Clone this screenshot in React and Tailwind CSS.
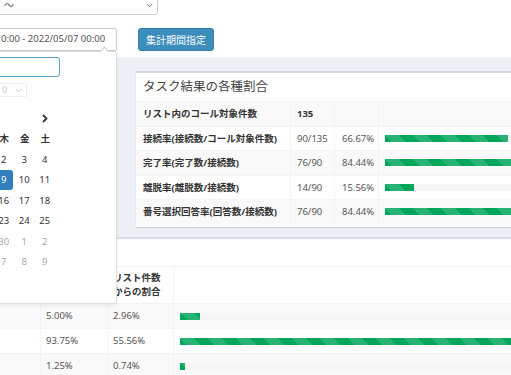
import React from 'react'

const stripe =
  "h-full bg-[#00a65a] bg-[linear-gradient(45deg,rgba(255,255,255,.15)_25%,transparent_25%,transparent_50%,rgba(255,255,255,.15)_50%,rgba(255,255,255,.15)_75%,transparent_75%,transparent)] bg-size-[28px_28px]";

const ratios = [
  { label: "リスト内のコール対象件数", value: "135", pct: null },
  { label: "接続率(接続数/コール対象件数)", value: "90/135", rate: "66.67%", pct: 66.67 },
  { label: "完了率(完了数/接続数)", value: "76/90", rate: "84.44%", pct: 84.44 },
  { label: "離脱率(離脱数/接続数)", value: "14/90", rate: "15.56%", pct: 15.56 },
  { label: "番号選択回答率(回答数/接続数)", value: "76/90", rate: "84.44%", pct: 84.44 },
];

const lower = [
  { a: "5.00%", b: "2.96%", pct: 5 },
  { a: "93.75%", b: "55.56%", pct: 93.75 },
  { a: "1.25%", b: "0.74%", pct: 1.25 },
];

// june 2022, off = grey
const weeks = [
  [[29, 1], [30, 1], [31, 1], [1], [2], [3], [4]],
  [[5], [6], [7], [8], [9], [10], [11]],
  [[12], [13], [14], [15], [16], [17], [18]],
  [[19], [20], [21], [22], [23], [24], [25]],
  [[26], [27], [28], [29], [30, 1], [1, 1], [2, 1]],
  [[3, 1], [4, 1], [5, 1], [6, 1], [7, 1], [8, 1], [9, 1]],
];
const days = ["日", "月", "火", "水", "木", "金", "土"];

function Chevron() {
  return (
    <svg width="7" height="5" viewBox="0 0 7 5" fill="none">
      <path d="M0.8 1 L3.5 3.8 L6.2 1" stroke="#666" strokeWidth="0.9" />
    </svg>
  );
}

function DatePicker() {
  return (
    <div className="absolute left-[-100px] top-[51px] w-[217px] h-[253px] bg-white border border-[#ddd] rounded-[3px] shadow-[0_2px_4px_rgba(0,0,0,0.06)]">
      {/* arrow */}
      <div className="absolute right-[8px] -top-[4px] w-[7px] h-[7px] bg-white border-l border-t border-[#ccc] rotate-45"></div>
      <div className="pl-[11px] pt-[5px]">
        <div className="w-[148px] h-[20px] border border-[#5a9fc8] rounded-[3px]"></div>
        <div className="mt-[6px] ml-[75px] w-[40px] h-[14px] border border-[#eee] rounded-[2px] flex items-center justify-between pl-[14px] pr-[4px] text-[9px] text-[#ccc]">
          <span>0</span>
          <span className="opacity-40"><Chevron /></span>
        </div>
        <div className="mt-[11px] w-[143.5px] text-[9.5px] leading-none">
          <div className="grid grid-cols-7 h-[20.5px] items-center">
            <div className="col-span-4 flex justify-end pr-[5px]">
              <span className="w-[1.5px] h-[7px] bg-[#9cc0dc]"></span>
            </div>
            <div></div>
            <div></div>
            <div className="flex justify-center">
              <svg width="6" height="9" viewBox="0 0 6 9" fill="none">
                <path d="M1 1 L4.5 4.5 L1 8" stroke="#333" strokeWidth="1.8" />
              </svg>
            </div>
          </div>
          <div className="grid grid-cols-7 h-[20.5px] items-center font-bold text-[#333]">
            {days.map((d) => (
              <div key={d} className="text-center">{d}</div>
            ))}
          </div>
          {weeks.map((w, i) => (
            <div key={i} className="grid grid-cols-7 h-[20.5px]">
              {w.map(([d, off], j) => {
                const sel = i === 1 && d === 9;
                return (
                  <div key={j} className="p-[0.5px] pr-[1.5px]">
                    <div
                      className={`h-full flex items-center justify-center rounded-[3px] ${
                        sel ? "bg-[#357ebd] text-white" : off ? "text-[#aaa]" : "text-[#333]"
                      }`}
                    >
                      {d}
                    </div>
                  </div>
                );
              })}
            </div>
          ))}
        </div>
      </div>
    </div>
  );
}

export default function App() {
  return (
    <div className="relative w-[511px] h-[375px] overflow-hidden bg-white font-['Noto_Sans','Noto_Sans_CJK_JP',sans-serif]">
      {/* filter form */}
      <div className="h-[57px] flex flex-col">
        <div className="-mt-[9px] -ml-[10px] w-[168px] h-[24px] shrink-0 border border-[#ccc] rounded-[3px] flex items-end justify-between pl-[13px] pr-[4px] pb-[4px] text-[10px] text-[#555] leading-none">
          <span>〜</span>
          <span className="mb-[2px]"><Chevron /></span>
        </div>
        <div className="mt-[13px] flex items-start">
          <div className="-ml-[10px] w-[127px] h-[23px] border border-[#ccc] rounded-[2px] flex items-center pl-[10px] text-[9.5px] text-[#555]">
            0:00 - 2022/05/07 00:00
          </div>
          <button className="ml-[21px] w-[76px] h-[23px] bg-[#3c8dbc] border border-[#367fa9] rounded-[3px] text-white text-[10px] leading-none">
            集計期間指定
          </button>
        </div>
      </div>

      {/* ratio box */}
      <div className="h-[180px] bg-[#ecf0f5] pt-[13px] border-t border-[#f3f5f8]">
        <div className="ml-[136px] w-[438px] bg-white border-t-2 border-[#d2d6de] shadow-[0_1px_1px_rgba(0,0,0,0.12)] pb-[3px]">
          <div className="h-[28px] flex items-center pl-[7px] text-[12.5px] text-[#444]">タスク結果の各種割合</div>
          {ratios.map((r, i) => (
            <div
              key={r.label}
              className={`grid grid-cols-[154px_44px_44px_196px] h-[24.5px] border-t border-[#f4f4f4] text-[9.5px] leading-none ${
                i % 2 === 0 ? "bg-[#f9f9f9]" : "bg-white"
              }`}
            >
              <div className="flex items-center pl-[7px] font-bold text-[#333]">{r.label}</div>
              <div className={`flex items-center pl-[6px] border-l border-[#f4f4f4] ${r.pct === null ? "font-bold text-[#333]" : "text-[#555]"}`}>
                {r.value}
              </div>
              <div className="flex items-center pl-[7px] border-l border-[#f4f4f4] text-[#555]">{r.rate}</div>
              <div className="flex items-center pl-[6px] border-l border-[#f4f4f4]">
                {r.pct !== null && (
                  <div className="w-[184px] h-[7px] bg-[#f5f5f5]">
                    <div className={stripe} style={{ width: `${r.pct}%` }}></div>
                  </div>
                )}
              </div>
            </div>
          ))}
        </div>
      </div>

      {/* lower box */}
      <div className="border-t-2 border-[#d8dce3] bg-white">
        <div className="-ml-[60px] w-[651px] pt-[27px]">
          <div className="grid grid-cols-[100px_67px_66px_418px] h-[38px] border-t border-b border-[#f2f2f2] text-[9.5px] font-bold text-[#333] leading-[14px]">
            <div></div>
            <div className="border-l border-[#f4f4f4]"></div>
            <div className="border-l border-[#f4f4f4] pl-[5px] flex flex-col justify-center">
              <span>リスト件数</span>
              <span>からの割合</span>
            </div>
            <div className="border-l border-[#f4f4f4]"></div>
          </div>
          {lower.map((r, i) => (
            <div
              key={r.a}
              className={`grid grid-cols-[100px_67px_66px_418px] h-[25px] border-b border-[#f4f4f4] text-[9.5px] text-[#555] leading-none ${
                i % 2 === 0 ? "bg-[#f9f9f9]" : "bg-white"
              }`}
            >
              <div></div>
              <div className="border-l border-[#f4f4f4] flex items-center pl-[5px]">{r.a}</div>
              <div className="border-l border-[#f4f4f4] flex items-center pl-[5px]">{r.b}</div>
              <div className="border-l border-[#f4f4f4] flex items-center pl-[6px]">
                <div className="w-[400px] h-[7px] bg-[#f5f5f5]">
                  <div className={stripe} style={{ width: `${r.pct}%` }}></div>
                </div>
              </div>
            </div>
          ))}
        </div>
      </div>

      <DatePicker />
    </div>
  );
}
